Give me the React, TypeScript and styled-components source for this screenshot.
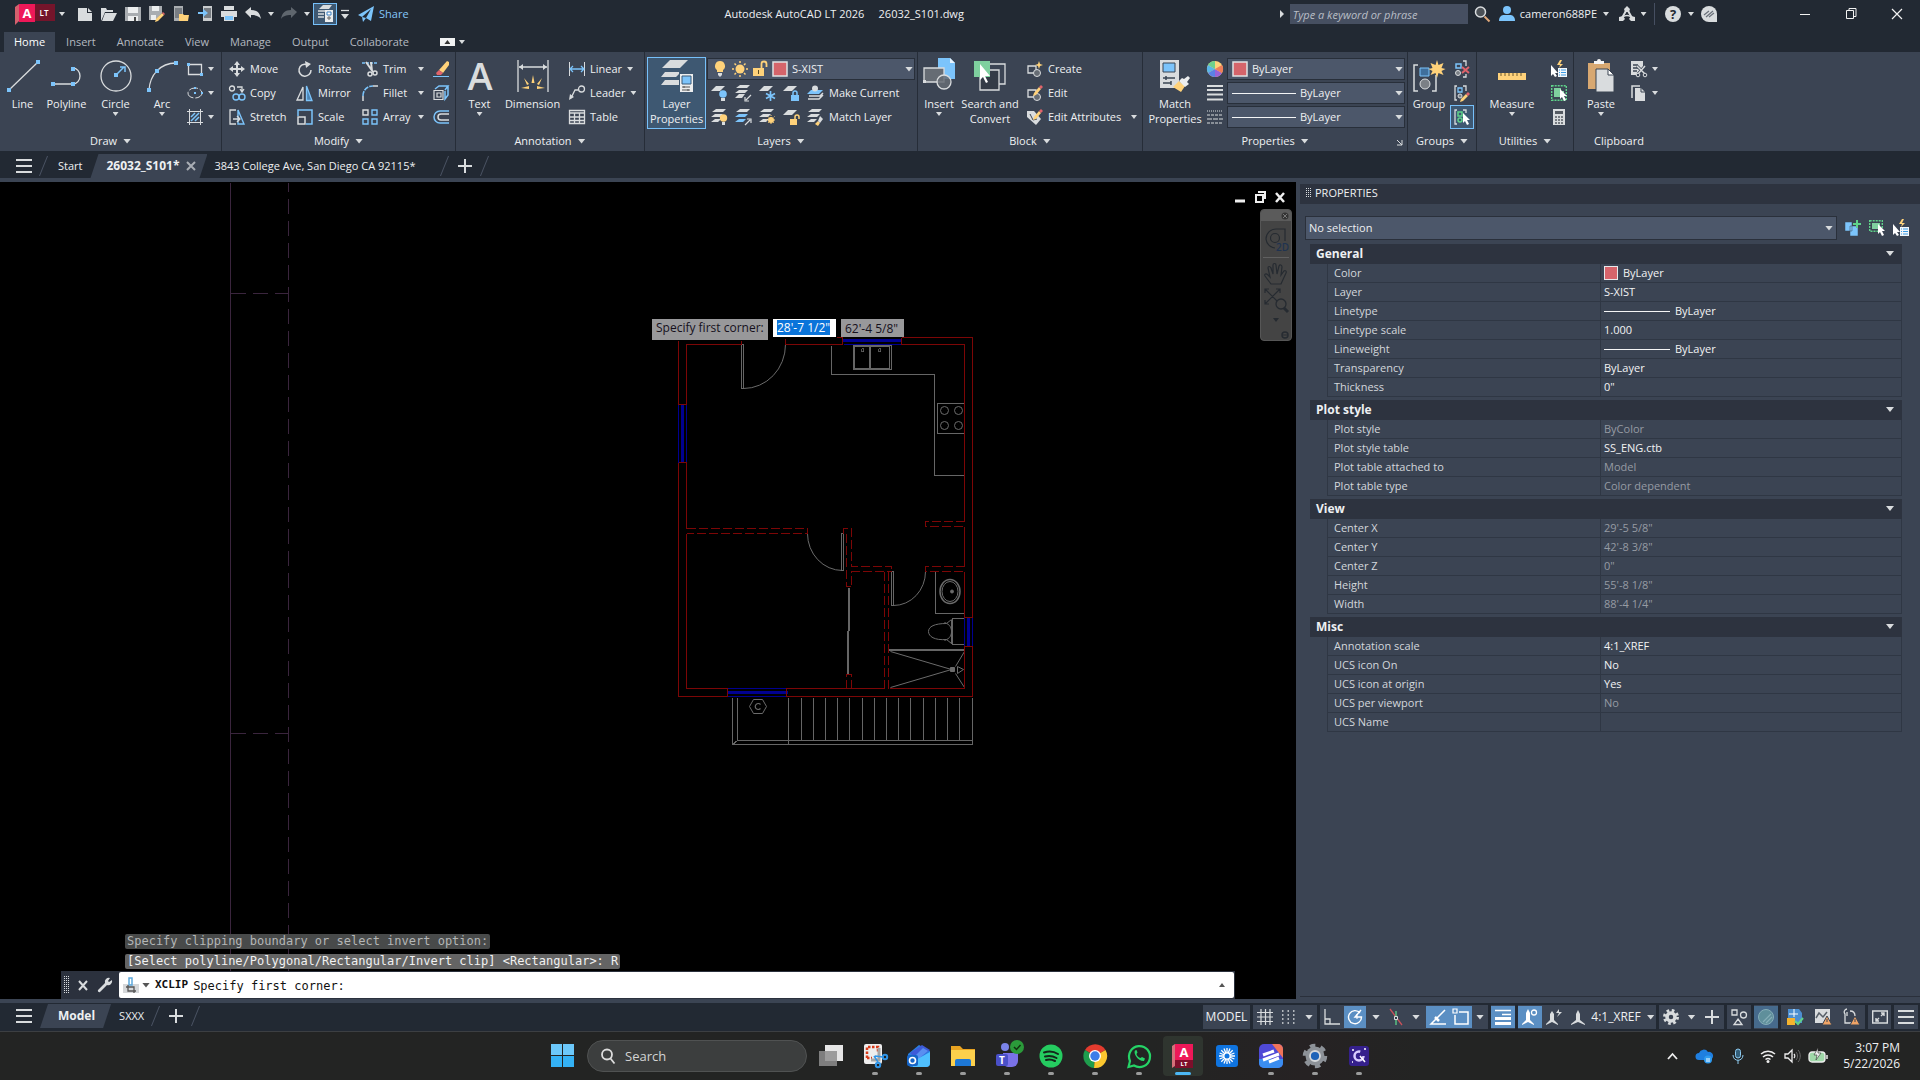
import React from "react";
import styled, { createGlobalStyle, css } from "styled-components";

const W = "#d9dcde";
const B = "#7cc4fb";
const Y = "#ffd27a";
const G = "#5fd28a";
const R = "#e0636b";

const Global = createGlobalStyle`
  * { box-sizing: border-box; }
  html, body, #root { height: 100%; margin: 0; }
  body { background: #222933; overflow: hidden; }
  body, button, input, select, table {
    font-family: "Open Sans", "Noto Sans", sans-serif;
    font-size: 11px;
    line-height: 16px;
    color: #eef0f2;
  }
  button { border: 0; padding: 0; margin: 0; background: none; white-space: nowrap; }
  button, a { cursor: default; }
  input, select { margin: 0; min-width: 0; }
`;

/* ---------- shared pieces ---------- */

const Caret = styled.i<{ $big?: boolean; $up?: boolean; $color?: string }>`
  display: block;
  flex: none;
  width: ${(p) => (p.$big ? 8 : 6)}px;
  height: ${(p) => (p.$big ? 5 : 4)}px;
  background: ${(p) => p.$color ?? W};
  clip-path: ${(p) => (p.$up ? "polygon(50% 0, 100% 100%, 0 100%)" : "polygon(0 0, 100% 0, 50% 100%)")};
`;

const Svg = styled.svg`
  display: block;
  flex: none;
  overflow: visible;
`;

const icons: Record<string, React.ReactNode> = {
  /* quick access */
  newFile: <path d="M1 2h9v5h5v8H1zM11 2l4 4h-4z" fill={W} />,
  open: (
    <>
      <path d="M0 15V2h5l1 2h6v2H4L1 13z" fill={W} />
      <path d="M4 7h12l-4 8H1z" fill={W} />
    </>
  ),
  save: (
    <>
      <path d="M0 1h16v14H0z" fill="#a9adb1" />
      <path d="M3 1h10v6H3zM3 10h10v5H3z" fill="#eceeef" />
      <path d="M9 11h2v4H9z" fill="#444" />
    </>
  ),
  saveAs: (
    <>
      <path d="M0 0h13v7l-6 7H0z" fill="#a9adb1" />
      <path d="M3 0h7v5H3zM2 9h5v5H2z" fill="#eceeef" />
      <path d="M7 13l6-6 2 2-6 6-3 1z" fill={Y} />
      <path d="M13 7l1-1 2 2-1 1z" fill={R} />
    </>
  ),
  mobileOpen: (
    <>
      <path d="M1 0h9v15H1z" fill="#a9adb1" />
      <path d="M2 2h7v10H2z" fill="#777c82" />
      <path d="M6 15V8h4l1 1h5l-1 6z" fill={Y} />
    </>
  ),
  mobileSave: (
    <>
      <path d="M6 0h9v15H6z" fill="#c9ccce" />
      <path d="M7 2h7v10H7z" fill="#777c82" />
      <path d="M1 6h5V3l5 4-5 4V8H1z" fill={B} />
    </>
  ),
  print: (
    <>
      <path d="M3 0h10v4H3zM0 5h16v6H0z" fill={W} />
      <path d="M3 9h10v6H3z" fill={W} />
      <path d="M4 10h8v4H4z" fill={B} />
    </>
  ),
  undo: <path d="M0 6l6-5v3c6 0 9 3 10 9-2-3-5-4-10-4v3z" fill={W} />,
  redo: <path d="M16 6l-6-5v3C4 4 1 7 0 13c2-3 5-4 10-4v3z" fill="#5f666e" />,
  sheet: (
    <>
      <path d="M6 0h9l-3 4H2z" fill={W} />
      <path d="M1 6h7M1 9h6M1 12h6" stroke={W} strokeWidth="1.500" />
      <path d="M8 5h8v12H8z" fill="#eceeef" />
      <path d="M10 7h4v3h-4z" fill="#fff" stroke="#3a7fc0" />
      <path d="M10 13h4M12 11v4" stroke="#666" />
    </>
  ),
  customize: (
    <>
      <path d="M0 2.500h8" stroke={W} strokeWidth="1.300" />
      <path d="M0 6h8l-4 5z" fill={W} />
    </>
  ),
  plane: (
    <>
      <path d="M0 9L16 0l-3 15-5-3-3 4-1-5z" fill={B} />
      <path d="M4 11l9-8-5 9" fill="#222933" />
    </>
  ),
  search: (
    <>
      <circle cx="6.500" cy="6" r="5" fill="#4c5157" stroke={W} strokeWidth="1.500" />
      <path d="M10.500 10.500l5 5" stroke="#e0a87a" strokeWidth="2" />
    </>
  ),
  user: (
    <>
      <circle cx="8" cy="4" r="4" fill={B} />
      <path d="M0 15c0-5 3-6 5-6h6c2 0 5 1 5 6z" fill={B} />
    </>
  ),
  apps: (
    <>
      <path d="M8 3L3 12M8 3l5 9" stroke={W} strokeWidth="2" fill="none" />
      <path d="M4 11c2-2 6-2 8 0" stroke={W} strokeWidth="1.300" fill="none" />
      <path d="M8 0l3 3-1 3H6L5 3zM0 11l4-1 2 3-2 2H0zM16 11l-4-1-2 3 2 2h4z" fill={W} />
    </>
  ),
  help: (
    <>
      <circle cx="8" cy="8" r="8" fill={W} />
      <text x="8" y="13" textAnchor="middle" fontSize="13" fontWeight="700" fill="#222933">?</text>
    </>
  ),
  assistant: (
    <>
      <path d="M16 16H8a8 8 0 1 1 8-8z" fill={W} />
      <path d="M3 9l5-4M5 11l7-6M8 11l5-4" stroke="#69707a" strokeWidth="1.200" />
    </>
  ),
  /* draw, 32px */
  line: (
    <>
      <path d="M2 30L31 2" stroke={W} strokeWidth="1.300" />
      <path d="M0 28h4v4H0zM29 0h4v4h-4z" fill={B} />
    </>
  ),
  polyline: (
    <>
      <path d="M2 24h20a7 8 0 0 0 0-16" fill="none" stroke={W} strokeWidth="1.300" />
      <path d="M0 22h4v4H0zM20 22h4v4h-4zM20 7h4v4h-4z" fill={B} />
    </>
  ),
  circle: (
    <>
      <circle cx="16" cy="16" r="15" fill="none" stroke={W} strokeWidth="1.300" />
      <path d="M16 15l8-8M20 7h5v5" stroke={B} strokeWidth="1.500" fill="none" />
      <path d="M14 13h4v4h-4z" fill={B} />
    </>
  ),
  arc: (
    <>
      <path d="M3 30C4 15 14 3 30 3" fill="none" stroke={W} strokeWidth="1.300" />
      <path d="M1 28h4v4H1zM9 9h4v4H9zM28 1h4v4h-4z" fill={B} />
    </>
  ),
  rect: (
    <>
      <path d="M1.500 3.500h13v10h-13z" fill="none" stroke={W} strokeWidth="1.300" />
      <path d="M0 2h3v3H0zM13 12h3v3h-3z" fill={B} />
    </>
  ),
  ellipse: (
    <>
      <ellipse cx="8" cy="8" rx="7" ry="5" fill="none" stroke={W} strokeDasharray="9 2" />
      <path d="M7 2h2v2H7zM7 7h2v2H7zM14 7h2v2h-2z" fill={B} />
    </>
  ),
  hatch: (
    <>
      <path d="M2.500 0v16M13.500 0v16M0 2.500h16M0 13.500h16" stroke={W} />
      <path d="M4 8l4-4M4 12l8-8M8 12l4-4" stroke={B} strokeWidth="1.500" />
    </>
  ),
  /* modify */
  move: <path d="M8 0l3 4H9v3h3V5l4 3-4 3V9H9v3h2l-3 4-3-4h2V9H4v2L0 8l4-3v2h3V4H5z" fill={W} />,
  rotate: (
    <>
      <path d="M10 3.500A6 6 0 1 0 14 9" fill="none" stroke={W} strokeWidth="1.500" />
      <path d="M8 0l6 3-5 4z" fill={W} />
    </>
  ),
  trim: (
    <>
      <path d="M0 2h16" stroke={B} strokeDasharray="3 1" strokeWidth="1.500" />
      <path d="M4 1l7 10M9 1l1 9" stroke={W} strokeWidth="2" />
      <circle cx="8" cy="13" r="2" fill="none" stroke={W} strokeWidth="1.500" />
      <circle cx="13" cy="12" r="2" fill="none" stroke={W} strokeWidth="1.500" />
    </>
  ),
  erase: (
    <>
      <path d="M0 15.500h16" stroke={B} />
      <path d="M6 9l8-9 2 1v3l-6 8z" fill={Y} />
      <path d="M6 9l4 3-2 2H4l-1-2z" fill={R} />
    </>
  ),
  copy: (
    <>
      <circle cx="3" cy="3.500" r="2.500" fill="none" stroke={W} strokeWidth="1.300" />
      <path d="M8 2h5v4M11 4l2 3 2-3" fill="none" stroke={W} strokeWidth="1.300" />
      <circle cx="7" cy="12" r="3" fill="none" stroke={B} strokeWidth="1.400" />
      <circle cx="13" cy="12" r="3" fill="none" stroke={B} strokeWidth="1.400" />
    </>
  ),
  mirror: (
    <>
      <path d="M6 2v13H0z" fill="none" stroke={W} strokeWidth="1.300" />
      <path d="M9.500 1v14.500H15z" fill="#4d85b5" stroke={B} strokeWidth="1.300" />
    </>
  ),
  fillet: (
    <>
      <path d="M1 16V11M11 1h5" stroke={W} strokeWidth="1.500" />
      <path d="M1 11C1 5 5 1 11 1" stroke={B} strokeWidth="1.600" fill="none" strokeDasharray="5 1" />
    </>
  ),
  explode: (
    <>
      <path d="M1 5.500h9v9H1zM4 8h4v4H4z" fill="none" stroke={W} strokeWidth="1.200" />
      <path d="M2 4l4-3h9l-3 4M15 1v9l-3 4V6" fill="none" stroke={B} strokeWidth="1.500" />
    </>
  ),
  stretch: (
    <>
      <path d="M7 1H1v14h6" fill="none" stroke={W} strokeWidth="1.300" />
      <path d="M9 1l6 14H9z" fill="none" stroke={B} strokeWidth="1.400" />
      <path d="M4 10h7M8 7l3 3-3 3" fill="none" stroke={W} strokeWidth="1.300" />
    </>
  ),
  scale: (
    <>
      <path d="M1 7V1h14v14H9" fill="none" stroke={B} strokeWidth="1.500" />
      <path d="M1 8h7v7H1z" fill="none" stroke={W} strokeWidth="1.500" />
    </>
  ),
  array: (
    <>
      <path d="M1 1h5v5H1z" fill="none" stroke={W} strokeWidth="1.400" />
      <path d="M10 1h5v5h-5zM1 10h5v5H1zM10 10h5v5h-5z" fill="none" stroke={B} strokeWidth="1.400" />
    </>
  ),
  offset: (
    <>
      <path d="M16 2H7a6 6 0 0 0 0 12h9" fill="none" stroke={B} strokeWidth="1.500" />
      <path d="M16 5H8a3 3 0 0 0 0 6h8" fill="none" stroke={W} strokeWidth="1.500" />
    </>
  ),
  /* annotation */
  text: (
    <text x="16" y="30" textAnchor="middle" fontSize="38" fontWeight="600" fill={W}>A</text>
  ),
  dimension: (
    <>
      <path d="M1 0v32M31 0v32M2 7h28" stroke={W} strokeWidth="1.300" />
      <path d="M2 7l4-3v6zM30 7l-4-3v6z" fill={W} />
      <path d="M16 15l1.500 8h-3zM7 18l5 6-2 1zM25 18l-5 6 2 1zM4 28l8-2v3zM28 28l-8-2v3z" fill={Y} />
    </>
  ),
  linear: (
    <>
      <path d="M.5 1v14M15.500 1v14" stroke={W} />
      <path d="M2 8h12M4 5L1 8l3 3M12 5l3 3-3 3" stroke={B} strokeWidth="1.300" fill="none" />
    </>
  ),
  leader: (
    <>
      <circle cx="12.500" cy="4" r="3" fill="none" stroke={W} strokeWidth="1.300" />
      <path d="M9 5H6l-4 8" fill="none" stroke={W} strokeWidth="1.300" />
      <path d="M0 15l1-6 4 3z" fill={W} />
    </>
  ),
  table: (
    <path d="M.5 1.500h15v13H.5zM1 4h15M0 8h16M0 11.500h16M5.500 4v11M10.500 4v11" fill="none" stroke={W} strokeWidth="1.300" />
  ),
  /* layers */
  layerProps: (
    <>
      <path d="M9 0h18l-8 8H1z" fill={W} />
      <path d="M4 12h14v2l-3 3H0zM4 20h14v5H0z" fill={W} />
      <path d="M19 14h13v18H19z" fill="#eceeef" />
      <path d="M21 16h9v8h-9z" fill={B} stroke="#3a5a78" />
      <path d="M21 27h8M21 30h8M23 26v2M27 29v2" stroke="#555" />
    </>
  ),
  bulb: (
    <>
      <path d="M8 0a5 5 0 0 1 3 9v2H5V9a5 5 0 0 1 3-9z" fill={Y} />
      <path d="M6 12h4v2l-2 2-2-2z" fill={W} />
    </>
  ),
  sun: (
    <>
      <circle cx="8" cy="8" r="4.500" fill={Y} />
      <path d="M8 0v2M8 14v2M0 8h2M14 8h2M2.500 2.500l1.500 1.500M12 12l1.500 1.500M2.500 13.500L4 12M12 4l1.500-1.500" stroke={Y} strokeWidth="1.500" />
    </>
  ),
  unlock: (
    <>
      <path d="M1 7h11v8H1z" fill={Y} />
      <path d="M9.500 7V3a2.500 2.500 0 0 1 5 0v3" fill="none" stroke={Y} strokeWidth="1.800" />
      <path d="M6 9h1v4H6z" fill="#5a4a20" />
    </>
  ),
  swatch: <path d="M1 1h14v14H1z" fill="#d6646b" stroke="#dfe2e5" strokeWidth="1.500" />,
  layOff: (
    <>
      <path d="M5 1h9L9 6H0z" fill={W} />
      <circle cx="12" cy="9" r="3.800" fill={B} />
      <path d="M10 13h4v3h-4z" fill={W} />
    </>
  ),
  layIso: (
    <>
      <path d="M5 0h10l-3 3H1zM4 5h9l-3 3H0zM4 9h6l-3 4H0z" fill={W} />
      <path d="M16 10l-5 5M10 12v4h4" stroke={W} fill="none" strokeWidth="1.200" />
    </>
  ),
  layFreeze: (
    <>
      <path d="M5 1h9L9 6H0z" fill={W} />
      <path d="M11.500 6v10M7 8.500l9 5M7 13.500l9-5" stroke={B} strokeWidth="1.700" />
    </>
  ),
  layLock: (
    <>
      <path d="M5 1h9L9 6H0z" fill={W} />
      <path d="M8 10h8v6H8z" fill={B} />
      <path d="M10 10V8a2 2 0 0 1 4 0v2" fill="none" stroke={B} strokeWidth="1.500" />
    </>
  ),
  makeCurrent: (
    <>
      <path d="M4 5h12l-4 4H0z" fill={B} />
      <path d="M2 11h11l3-3M1 14h11l4-4" stroke={W} strokeWidth="1.500" fill="none" />
      <circle cx="8" cy="3.500" r="3" fill={W} />
    </>
  ),
  layOn: (
    <>
      <path d="M5 0h10l-3 3H1zM4 5h8l-3 3H0zM4 10h6l-3 3H0z" fill={W} />
      <circle cx="12.500" cy="9" r="3.700" fill={Y} />
      <path d="M11 13h3v3h-3z" fill={W} />
    </>
  ),
  layUniso: (
    <>
      <path d="M5 0h10l-3 3H1z" fill={W} />
      <path d="M4 5h9l-3 3H0zM4 10h7l-3 3H0z" fill={B} />
      <path d="M10 16l5-5M12 10h4v4" stroke={W} fill="none" strokeWidth="1.200" />
    </>
  ),
  layThaw: (
    <>
      <path d="M5 0h10l-3 3H1zM4 5h8l-3 3H0zM4 10h6l-3 3H0z" fill={W} />
      <circle cx="12" cy="11" r="3" fill={Y} />
      <path d="M12 6v10M7 11h10M8.500 7.500l7 7M15.500 7.500l-7 7" stroke={Y} strokeDasharray="1 1" />
    </>
  ),
  layUnlock: (
    <>
      <path d="M5 1h9L9 6H0z" fill={W} />
      <path d="M7 10h7v6H7z" fill={Y} />
      <path d="M12 10V8a2 2 0 0 1 4 0v2" fill="none" stroke={Y} strokeWidth="1.500" />
    </>
  ),
  matchLayer: (
    <>
      <path d="M5 0h10l-3 3H1zM4 5h9l-3 3H0zM4 10h6l-3 3H0z" fill={W} />
      <path d="M8 15l3-3 2 2-2 3z" fill={Y} />
      <path d="M11 12l2-5 3 3-3 4z" fill={W} />
    </>
  ),
  /* block */
  insert: (
    <>
      <path d="M15-2h12l5 5v16H15z" fill={B} />
      <path d="M27-2l5 5h-5z" fill="#e9f4fd" />
      <path d="M1 8h20v14H1z" fill="#666c74" stroke={W} strokeWidth="1.300" />
      <circle cx="21" cy="22" r="7" fill="#666c74" fillOpacity=".85" stroke={W} strokeWidth="1.300" />
      <path d="M0 20h3v3H0z" fill={W} />
    </>
  ),
  searchConvert: (
    <>
      <path d="M13 4h18v20H13z" fill="none" stroke={W} strokeWidth="1.300" />
      <path d="M6 10h19v20H6z" fill="#343b47" stroke={W} strokeWidth="1.300" />
      <path d="M0 1h16v16H0z" fill="#7fd09f" />
      <path d="M6 4v16l3-3 3 6 2-1-3-6h5z" fill="#fff" />
    </>
  ),
  create: (
    <>
      <path d="M1 5h8v7H1z" fill="none" stroke={W} strokeWidth="1.300" />
      <circle cx="10" cy="12" r="3.500" fill="#666c74" stroke={W} />
      <path d="M12 0l1 3 3 1-3 1-1 3-1-3-3-1 3-1z" fill={Y} />
    </>
  ),
  edit: (
    <>
      <path d="M1 5h8v7H1z" fill="none" stroke={W} strokeWidth="1.300" />
      <circle cx="10" cy="12" r="3.500" fill="#666c74" stroke={W} />
      <path d="M7 8l5-6 2 2-5 6-3 1z" fill={Y} />
      <path d="M12 2l2-2 2 2-2 2z" fill={R} />
    </>
  ),
  editAttr: (
    <>
      <path d="M0 2h7l7 8-5 6-9-8z" fill={W} />
      <path d="M3 5l3 6 4-1" stroke="#3b4453" fill="none" />
      <path d="M7 8l5-6 2 2-5 6-3 1z" fill={Y} />
      <path d="M12 2l2-2 2 2-2 2z" fill={R} />
    </>
  ),
  /* properties */
  matchProps: (
    <>
      <path d="M1 0h19v28H1z" fill={W} />
      <path d="M4 3h12v9H4z" fill={B} stroke="#3a4654" />
      <path d="M4 18h12M4 23h8M7 16v4M12 21v4" stroke="#3a4654" strokeWidth="1.500" />
      <path d="M14 27l6-6 6 5-4 6z" fill={Y} />
      <path d="M20 21l3-3 2 1 4-3 2 2-3 4 2 2-4 3z" fill="#eceeef" />
    </>
  ),
  wheel: (
    <>
      <circle cx="8" cy="8" r="8" fill={Y} />
      <path d="M8 8V0a8 8 0 0 0-7 4z" fill="#6fd08c" />
      <path d="M8 8L1 4a8 8 0 0 0 0 8z" fill="#59b7e8" />
      <path d="M8 8l-7 4a8 8 0 0 0 7 4z" fill="#5a82e6" />
      <path d="M8 8v8a8 8 0 0 0 7-4z" fill="#9a63d8" />
      <path d="M8 8l7 4a8 8 0 0 0 0-8z" fill="#ef7f5a" />
    </>
  ),
  weights: <path d="M0 1h16M0 5h16M0 9.500h16M0 14.500h16" stroke={W} strokeWidth="2" />,
  ltypes: (
    <>
      <path d="M0 2h16" stroke={W} strokeDasharray="1 1" />
      <path d="M0 6h16M0 14h16" stroke={W} strokeDasharray="3 1" />
      <path d="M0 10h16" stroke={W} strokeDasharray="5 1" />
    </>
  ),
  /* groups */
  group: (
    <>
      <path d="M5 5H1v26h4M19 31h4V15" fill="none" stroke={W} strokeWidth="1.500" />
      <path d="M7 8h9v8H7z" fill="#3f6f9c" stroke={B} />
      <circle cx="12" cy="24" r="5" fill="#7b8086" stroke={W} />
      <path d="M24 0l1.500 5 5-2-2 5 4 1-4 2 2 4-5-2-1.500 5-1.500-5-5 2 2-4-4-2 4-1-2-5 5 2z" fill={Y} />
    </>
  ),
  ungroup: (
    <>
      <path d="M2 3h5v4H2z" fill="none" stroke={B} strokeWidth="1.500" />
      <circle cx="4" cy="12" r="2.500" fill="#7b8086" stroke={W} />
      <path d="M9 0h3v5M9 16h3v-3" fill="none" stroke={W} strokeWidth="1.300" />
      <path d="M8 6l7 6M15 6l-7 6" stroke={R} strokeWidth="2" />
    </>
  ),
  groupEdit: (
    <>
      <path d="M3 1H1v14h2M9 1h3v5" fill="none" stroke={W} strokeWidth="1.300" />
      <path d="M4 3h4v4H4z" fill="none" stroke={B} strokeWidth="1.300" />
      <circle cx="6" cy="11" r="2" fill="#7b8086" stroke={W} />
      <path d="M7 14l5-5 2 2-5 5-3 1z" fill={Y} />
      <path d="M12 9l2-2 2 2-2 2z" fill={R} />
    </>
  ),
  groupSel: (
    <>
      <path d="M3 1H1v14h2M9 1h3v3" fill="none" stroke={W} strokeWidth="1.300" />
      <path d="M4 3h4v4H4z" fill="none" stroke={G} strokeWidth="1.500" />
      <circle cx="6" cy="11" r="2" fill="none" stroke={G} strokeWidth="1.500" />
      <path d="M9 4v10l2-2 2 4 2-1-2-4h3z" fill="#fff" />
    </>
  ),
  /* utilities */
  measure: (
    <>
      <path d="M2 13h28v7H2z" fill={Y} />
      <path d="M5 13v3M9 13v3M13 13v3M17 13v3M21 13v3M25 13v3" stroke="#6d5a30" />
    </>
  ),
  quickSel: (
    <>
      <path d="M9-1l-3 5h3l-1 3 4-4H9l2-4z" fill={Y} />
      <path d="M0 4v11l2-2 2 3 2-1-2-3h3z" fill="#fff" />
      <path d="M7 7h9v9H7z" fill="#f4f8fb" />
      <path d="M8 9h1M8 11.500h1M8 14h1M10 9h5M10 11.500h5M10 14h5" stroke="#3a9be6" />
    </>
  ),
  selectAll: (
    <>
      <path d="M.7.7h14.600v14.600H.7z" fill="none" stroke={G} strokeWidth="1.400" strokeDasharray="2 1" />
      <path d="M3 3h7v3h3v6H3z" fill="#7fd09f" />
      <path d="M9 4v10l2-2 2 4 2-1-2-4h3z" fill="#fff" />
    </>
  ),
  selectObjects: (
    <>
      <path d="M.7.7h12.600v10.600H.7z" fill="none" stroke={G} strokeWidth="1.400" strokeDasharray="2 1" />
      <path d="M3 3h8v6H3z" fill="#7fd09f" />
      <path d="M9 4v10l2-2 2 4 2-1-2-4h3z" fill="#fff" />
    </>
  ),
  calc: (
    <>
      <path d="M2 0h12v16H2z" fill={W} />
      <path d="M4 2h8v3H4z" fill="#555b63" />
      <path d="M4 8h8M4 11h8M4 14h8" stroke="#555b63" strokeWidth="1.600" strokeDasharray="2 1" />
    </>
  ),
  /* clipboard */
  paste: (
    <>
      <path d="M3 3h22v26H3z" fill="#d8a871" />
      <path d="M9 4V1h3a2 2 0 0 1 4 0h3v3z" fill="#f4f4f4" />
      <path d="M11 9h12l6 6v17H11z" fill={W} stroke="#3b4453" />
      <path d="M23 9l6 6h-6z" fill="#fff" stroke="#3b4453" />
    </>
  ),
  cut: (
    <>
      <path d="M0 0h12v6l-4 8H0z" fill={W} />
      <path d="M2 4h5M2 7h5M2 10h4" stroke="#3b4453" strokeWidth="1.300" />
      <path d="M6 5l8 8M14 5l-7 8" stroke="#3b4453" strokeWidth="3" />
      <path d="M6 5l8 8M14 5l-7 8" stroke={W} strokeWidth="1.500" />
      <circle cx="7" cy="14" r="1.800" fill="#3b4453" stroke={W} />
      <circle cx="14" cy="14" r="1.800" fill="#3b4453" stroke={W} />
    </>
  ),
  copyClip: (
    <>
      <path d="M1 13V1h8" fill="none" stroke={W} strokeWidth="1.500" />
      <path d="M4 3h6l4 4v9H4z" fill={W} />
      <path d="M10 3v4h4" fill="none" stroke="#3b4453" />
    </>
  ),
  pickAdd: (
    <>
      <path d="M0 2h7v9H0zM5 6h8v10H5z" fill={B} stroke="#3b4453" strokeWidth=".5" />
      <path d="M12 0v8M8 4h8" stroke={G} strokeWidth="2" />
    </>
  ),
  /* misc */
  plus: <path d="M8 1v14M1 8h14" stroke={W} strokeWidth="2" />,
  menu: <path d="M0 2h16M0 8h16M0 14h16" stroke={W} strokeWidth="2" />,
  close: <path d="M3 4l8 9M11 4l-8 9" stroke={W} strokeWidth="2" />,
  wrench: (
    <path d="M1 13l7-7a4 4 0 0 1 5-5l-2 3 1 1 3-2a4 4 0 0 1-5 5l-7 7a1.500 1.500 0 0 1-2-2z" fill={W} />
  ),
  xclip: (
    <>
      <path d="M0 7h16v9H0z" fill="#d5d7d9" />
      <path d="M6 1h3v7H6z" fill="none" stroke="#5ea9dc" strokeWidth="1.500" />
      <path d="M5 8v6h8M3 10h8v6" fill="none" stroke="#555" strokeWidth="1.300" />
    </>
  ),
  /* status */
  grid: <path d="M4 0v16M8.500 0v16M13 0v16M0 3.500h16M0 8h16M0 12.500h16" stroke={W} strokeWidth="1.200" />,
  snap: <path d="M1 2h14M1 6h14M1 10h14M1 14h14" stroke={W} strokeWidth="1.500" strokeDasharray="1.500 4" />,
  ortho: <path d="M1 0v15h15M1 10h5v5" fill="none" stroke={W} strokeWidth="1.300" />,
  polar: (
    <>
      <path d="M13 4a6.500 6.500 0 1 0 1.500 4H8l6-7" fill="none" stroke="#fff" strokeWidth="1.400" />
      <path d="M10 5v5" stroke="#fff" />
    </>
  ),
  iso: (
    <>
      <path d="M2 0l12 16" stroke="#c9525a" strokeWidth="1.300" />
      <path d="M8 2v14" stroke={G} strokeWidth="1.300" />
      <path d="M6.500 7.500h3v3h-3z" fill="#2f3744" stroke={W} />
    </>
  ),
  track: (
    <>
      <path d="M15 1L1 15h15" fill="none" stroke="#fff" strokeWidth="1.500" />
      <path d="M5 8l4 4" stroke="#fff" strokeWidth="2.500" />
    </>
  ),
  osnap: (
    <>
      <path d="M6 3h9v12H2V6" fill="none" stroke="#fff" strokeWidth="1.500" />
      <path d="M0 0h4v4H0z" fill="none" stroke="#fff" strokeWidth="1.200" />
    </>
  ),
  lweight: (
    <>
      <path d="M0 1.500h16M7 5.500h9" stroke="#fff" strokeWidth="1.600" />
      <path d="M0 9.500h16M0 14.500h16" stroke="#fff" strokeWidth="3" />
    </>
  ),
  annoVis: (
    <>
      <path d="M6 0l2 4v7l4 4v1l-6-3-6 3v-1l4-4V4z" fill="#fff" />
      <circle cx="12" cy="3.500" r="2.500" fill="none" stroke="#fff" strokeWidth="1.300" />
    </>
  ),
  annoAuto: (
    <>
      <path d="M6 2l2 3v6l4 4v1l-6-3-6 3v-1l4-4V5z" fill={W} />
      <path d="M13 0l-3 4h3l-2 4 5-5h-3z" fill={W} />
    </>
  ),
  annoScale: <path d="M8 1l2 4v6l5 4v1l-7-3-7 3v-1l5-4V5z" fill={W} />,
  gear: (
    <>
      <circle cx="8" cy="8" r="6.500" fill="none" stroke={W} strokeWidth="3" strokeDasharray="2.600 2.500" />
      <circle cx="8" cy="8" r="4" fill="none" stroke={W} strokeWidth="3.500" />
    </>
  ),
  isolate: (
    <>
      <path d="M1 1h5v5H1zM7 10l4 5.500H3z" fill="none" stroke={W} strokeWidth="1.300" />
      <circle cx="12.500" cy="6" r="3" fill="none" stroke={W} strokeWidth="1.300" />
    </>
  ),
  hardware: (
    <>
      <circle cx="8" cy="8" r="7.500" fill="#5f8f9b" stroke="#86aeb8" />
      <path d="M5 13l8-8M8 14l6-6" stroke="#86aeb8" strokeWidth="1.200" />
    </>
  ),
  xref: (
    <>
      <path d="M1 0h11l3 4v10H1z" fill="#4d8fd0" />
      <path d="M0 9h8v7H0z" fill="#f5b32e" />
      <path d="M7 0v8M2 5h9" stroke="#fff" />
      <path d="M8 12l3 3 5-6" stroke={G} strokeWidth="2" fill="none" />
    </>
  ),
  monitor: (
    <>
      <path d="M0 0h15v14H0z" fill={W} />
      <path d="M1 9l3-5 4 4 4-5" stroke="#586069" strokeWidth="1.500" fill="none" />
      <path d="M12 7l5 9H7z" fill="#f0a466" stroke="#3b4453" />
      <path d="M12 10v3" stroke="#3b4453" />
    </>
  ),
  notes: (
    <>
      <path d="M4 0a3 3 0 0 0-2 5v9h6M4 3v4M7 2c4 0 5 2 5 5" fill="none" stroke={W} strokeWidth="1.300" />
      <path d="M12 7l5 9H7z" fill="#f0a466" stroke="#3b4453" />
      <path d="M12 10v3" stroke="#3b4453" />
    </>
  ),
  clean: (
    <path d="M.7 2h14.600v12H.7zM4 9v3h3M12 7V4H9M4 12l3-3M12 4L9 7" fill="none" stroke={W} strokeWidth="1.400" />
  ),
  /* navigation bar */
  wheel2d: (
    <>
      <path d="M13 1h9v12M3 11a10 10 0 0 1 10-10M3 11a10 10 0 0 0 9 9" fill="none" stroke="#262b31" strokeWidth="1.200" />
      <circle cx="12" cy="10" r="4.500" fill="none" stroke="#262b31" strokeWidth="1.200" />
      <text x="13" y="23" fontSize="10" fontWeight="600" fill="#1f3350">2D</text>
    </>
  ),
  hand: (
    <path d="M7 22L1 14c-1-2 1-3 3-1l2 2-2-9c0-2 2-2 3 0l2 6V3c0-2 3-2 3 0l1 9 2-8c1-2 3-1 3 1l-1 8 3-4c1-1 3 0 2 2l-5 11z" fill="none" stroke="#262b31" strokeWidth="1.200" />
  ),
  zoomExt: (
    <>
      <path d="M1 1l15 15M16 1L1 16M1 5V1h4M12 1h4v4M1 12v4h4" fill="none" stroke="#262b31" strokeWidth="1.200" />
      <circle cx="17" cy="16" r="5" fill="#444" stroke="#262b31" strokeWidth="1.300" />
      <path d="M20 20l4 4" stroke="#262b31" strokeWidth="3" />
    </>
  ),
  winMin: <path d="M0 8.500h10" stroke="#f2f2f2" />,
  winRestore: (
    <path d="M.5 4.500h7v8h-7zM3 4V2.500h7v8H8" fill="none" stroke="#f2f2f2" />
  ),
  winClose: <path d="M0 3l10 10M10 3L0 13" stroke="#f2f2f2" strokeWidth="1.200" />,
};

function Icon({ n, s = 16, h }: { n: string; s?: number; h?: number }) {
  return (
    <Svg width={s} height={h ?? s} aria-hidden="true">
      {icons[n]}
    </Svg>
  );
}

/* ---------- application frame ---------- */

const Screen = styled.div`
  display: flex;
  flex-direction: column;
  height: 100vh;
`;

const TitleBar = styled.header`
  display: flex;
  align-items: center;
  height: 32px;
  padding: 0 0 4px 15px;
`;

const AppMenu = styled.button`
  display: flex;
  align-items: center;
  width: 58px;
  gap: 4px;
`;

const IconButton = styled.button<{ $w?: number; $h?: number; $on?: boolean }>`
  display: flex;
  align-items: center;
  justify-content: center;
  flex: none;
  width: ${(p) => p.$w ?? 24}px;
  height: ${(p) => p.$h ?? 22}px;
  ${(p) => p.$on && css`background: #3e5872; border: 1px solid #76c0fa;`}
`;

const ShareLink = styled.button`
  display: flex;
  align-items: center;
  gap: 5px;
  margin-left: 6px;
  color: #84c6fa;
`;

const DocTitle = styled.h1`
  flex: 1;
  margin: 0;
  text-align: center;
  font-size: 11px;
  font-weight: 400;
  white-space: pre;
`;

const KeywordBox = styled.input`
  width: 178px;
  height: 20px;
  margin: 0 2px 0 6px;
  padding: 0 3px;
  border: 0;
  background: #464f61;
  font-style: italic;
  &::placeholder { color: #b9bec6; opacity: 1; }
`;

const UserButton = styled.button`
  display: flex;
  align-items: center;
  gap: 5px;
  margin-left: 5px;
`;

const TitleDivider = styled.i`
  width: 1px;
  height: 22px;
  margin: 0 6px;
  background: #464f61;
`;

const WindowButtons = styled.div`
  display: flex;
  margin-left: 61px;
`;

const Tabs = styled.nav`
  display: flex;
  align-items: stretch;
  gap: 1px;
  height: 20px;
  padding-left: 4px;
`;

const Tab = styled.button<{ $on?: boolean }>`
  padding: 0 10px;
  color: ${(p) => (p.$on ? "#fff" : "#b4b9c0")};
  background: ${(p) => (p.$on ? "#3b4453" : "none")};
`;

const TabToggle = styled.button`
  display: flex;
  align-items: center;
  gap: 4px;
  margin-left: 20px;
  > span {
    display: grid;
    place-items: center;
    width: 15px;
    height: 8px;
    background: #f0f1f2;
  }
`;

const Ribbon = styled.section`
  display: flex;
  height: 99px;
  background: #3b4453;
`;

const Panel = styled.section<{ $w: number; $last?: boolean }>`
  position: relative;
  display: flex;
  flex-direction: column;
  flex: none;
  width: ${(p) => p.$w}px;
  border-right: ${(p) => (p.$last ? 0 : 1)}px solid #262d38;
`;

const PanelBody = styled.div`
  display: flex;
  flex: 1;
  padding-top: 5px;
`;

const PanelTitle = styled.button`
  display: flex;
  align-items: center;
  justify-content: center;
  gap: 6px;
  height: 20px;
`;

const Launcher = styled.button`
  position: absolute;
  right: 4px;
  bottom: 5px;
`;

const BigButton = styled.button<{ $w: number; $on?: boolean }>`
  display: flex;
  flex-direction: column;
  align-items: center;
  flex: none;
  width: ${(p) => p.$w}px;
  height: 72px;
  padding-top: ${(p) => (p.$on ? 2 : 3)}px;
  line-height: 15px;
  text-align: center;
  white-space: pre;
  ${(p) => p.$on && css`background: #3e5872; border: 1px solid #76c0fa;`}
  > span { margin-top: 4px; }
  > i { margin-top: 1px; }
`;

const Column = styled.div<{ $w?: number; $pad?: number }>`
  display: flex;
  flex-direction: column;
  flex: ${(p) => (p.$w ? "none" : 1)};
  width: ${(p) => (p.$w ? p.$w + "px" : "auto")};
  padding-left: ${(p) => p.$pad ?? 0}px;
`;

const Tool = styled.div<{ $pad?: number }>`
  display: flex;
  align-items: center;
  height: 24px;
  padding-left: ${(p) => p.$pad ?? 0}px;
`;

const ToolButton = styled.button`
  display: flex;
  align-items: center;
  gap: 5px;
`;

const DropButton = styled.button<{ $right?: boolean }>`
  display: flex;
  justify-content: center;
  width: 16px;
  margin-left: ${(p) => (p.$right ? "auto" : 0)};
`;

const LayerIcons = styled.div`
  display: flex;
  gap: 8px;
  padding-right: 6px;
`;

const Combo = styled.div`
  display: flex;
  align-items: center;
  gap: 4px;
  height: 22px;
  margin: 1px 2px 1px 0;
  padding: 0 1px 0 4px;
  background: #4c576a;
  border: 1px solid #282f3a;
  select {
    flex: 1;
    height: 20px;
    padding: 0;
    border: 0;
    appearance: none;
    background: none;
  }
  option { color: #111; }
`;

const LineSample = styled.i<{ $w: number }>`
  flex: none;
  width: ${(p) => p.$w}px;
  height: 1px;
  background: #f4f5f6;
`;

function ToolItem({ i, t, drop, right }: { i: string; t?: string; drop?: boolean; right?: boolean }) {
  return (
    <Tool>
      <ToolButton aria-label={t ?? i}>
        <Icon n={i} />
        {t}
      </ToolButton>
      {drop && (
        <DropButton $right={right} aria-label={`${t ?? i} options`}>
          <Caret />
        </DropButton>
      )}
    </Tool>
  );
}

function Big({ i, t, w, drop, on }: { i: string; t: string; w: number; drop?: boolean; on?: boolean }) {
  return (
    <BigButton $w={w} $on={on}>
      <Icon n={i} s={32} />
      <span>{t}</span>
      {drop && <Caret />}
    </BigButton>
  );
}

function RibbonPanel(p: { w: number; t: string; last?: boolean; noMenu?: boolean; children: React.ReactNode; extra?: React.ReactNode }) {
  return (
    <Panel $w={p.w} $last={p.last}>
      <PanelBody>{p.children}</PanelBody>
      <PanelTitle>
        {p.t}
        {!p.noMenu && <Caret $big />}
      </PanelTitle>
      {p.extra}
    </Panel>
  );
}

/* ---------- document tabs ---------- */

const DocTabs = styled.nav`
  display: flex;
  align-items: center;
  height: 27px;
  padding: 3px 0 0 12px;
`;

const Strip = styled.div`
  height: 4px;
  background: #3b4453;
`;

const Slash = styled.i`
  flex: none;
  width: 1px;
  height: 20px;
  margin: 0 8px 0 7px;
  background: #4b5464;
  transform: skewX(-22deg);
`;

const DocTab = styled.button<{ $on?: boolean; $pad: string; $ml?: number }>`
  display: flex;
  align-items: center;
  gap: 8px;
  height: 24px;
  margin-left: ${(p) => p.$ml ?? 0}px;
  padding: ${(p) => p.$pad};
  ${(p) => p.$on && css`
    font-size: 12px;
    font-weight: 700;
    background: #3b4453;
    clip-path: polygon(8px 0, 100% 0, calc(100% - 8px) 100%, 0 100%);
  `}
`;

/* ---------- work area ---------- */

const Work = styled.main`
  display: flex;
  flex: 1;
  min-height: 0;
`;

const Canvas = styled.section`
  position: relative;
  flex: 1;
  overflow: hidden;
  background: #000;
`;

const Drawing = styled.svg`
  position: absolute;
  inset: 0;
  width: 100%;
  height: 100%;
  shape-rendering: crispEdges;
`;

const DynamicInput = styled.div`
  position: absolute;
  left: 652px;
  top: 137px;
  display: flex;
  align-items: flex-start;
  gap: 5px;
  font-size: 12px;
`;

const Prompt = styled.label`
  height: 21px;
  padding: 1px 0 0 4px;
  width: 116px;
  color: #15101c;
  background: #98989a;
`;

const Coord = styled.input`
  width: 63px;
  height: 18px;
  padding: 0 4px;
  border: 0;
  font-size: 12px;
  color: #15101c;
  background: #98989a;
`;

const ActiveCoord = styled.label`
  display: block;
  width: 63px;
  height: 18px;
  padding: 1px 4px;
  background: #fff;
  input {
    display: block;
    width: 53px;
    height: 15px;
    padding: 0;
    border: 0;
    font-size: 12px;
    color: #fff;
    background: #0a74da;
  }
`;

const ChildButtons = styled.div`
  position: absolute;
  right: 11px;
  top: 9px;
  display: flex;
  gap: 9px;
`;

const NavBar = styled.nav`
  position: absolute;
  right: 4px;
  top: 27px;
  display: flex;
  flex-direction: column;
  align-items: center;
  width: 32px;
  height: 132px;
  border: 1px solid #565656;
  border-radius: 4px;
  background: #444;
  overflow: hidden;
`;

const NavCap = styled.div<{ $top?: boolean }>`
  display: flex;
  justify-content: flex-end;
  align-items: center;
  width: 100%;
  height: 11px;
  padding-right: 2px;
  margin-top: ${(p) => (p.$top ? 0 : "auto")};
  background: ${(p) => (p.$top ? "#5b5b5b" : "none")};
`;

const NavRule = styled.i`
  width: 26px;
  height: 1px;
  background: #606060;
`;

const CommandArea = styled.div`
  position: absolute;
  left: 61px;
  right: 61px;
  bottom: 0;
  font-family: "DejaVu Sans Mono", monospace;
`;

const History = styled.p<{ $new?: boolean }>`
  width: fit-content;
  height: 15px;
  margin: 0 0 5px 64px;
  padding: 0 2px;
  border-radius: 2px;
  font-size: 12px;
  line-height: 15px;
  white-space: pre;
  color: ${(p) => (p.$new ? "#f2f2f2" : "#b4b6b6")};
  background: ${(p) => (p.$new ? "#646464" : "#484a4a")};
  &:nth-of-type(2) { margin-bottom: 2px; }
`;

const CommandBar = styled.div`
  display: flex;
  height: 28px;
  background: #2b313d;
  border: 1px solid #2b313d;
`;

const CommandTools = styled.div`
  display: flex;
  align-items: center;
  gap: 7px;
  width: 57px;
  padding-left: 2px;
`;

const CommandLine = styled.label`
  display: flex;
  align-items: center;
  flex: 1;
  padding: 0 4px;
  border-radius: 2px;
  background: #fff;
  color: #111;
  font-size: 12px;
  > i { margin: 0 5px 0 3px; }
  > strong { font-weight: 700; font-size: 11px; margin-right: 5px; }
  > input {
    flex: 1;
    padding: 1px 0 0;
    border: 0;
    font: inherit;
    color: #111;
    background: none;
  }
`;

const Grip = styled.i<{ $h: number }>`
  flex: none;
  width: 5px;
  height: ${(p) => p.$h}px;
  background: repeating-linear-gradient(#0000 0 1px, #2b313d 1px 2px),
    repeating-linear-gradient(90deg, ${W} 0 1px, #2b313d 1px 2px);
`;

/* ---------- properties palette ---------- */

const Palette = styled.aside`
  display: flex;
  flex-direction: column;
  width: 624px;
  padding: 2px 0 2px 4px;
  background: #3b4453;
`;

const PaletteTitle = styled.h2`
  display: flex;
  align-items: center;
  gap: 4px;
  height: 20px;
  margin: 0;
  padding: 0 0 3px 6px;
  font-size: 11px;
  font-weight: 400;
  background: #2d333f;
`;

const PaletteBody = styled.div`
  flex: 1;
  padding-top: 12px;
  border-bottom: 1px solid #2a303b;
`;

const SelectionRow = styled.div`
  display: flex;
  align-items: center;
  gap: 8px;
  padding: 0 11px 0 5px;
  margin-bottom: 4px;
`;

const SelectionBox = styled.div`
  display: flex;
  align-items: center;
  flex: 1;
  height: 24px;
  padding: 0 3px;
  background: #4c576a;
  border: 1px solid #2a303b;
  select {
    flex: 1;
    height: 22px;
    padding: 0;
    border: 0;
    appearance: none;
    background: none;
  }
  option { color: #111; }
`;

const SectionTitle = styled.button`
  display: flex;
  align-items: center;
  justify-content: space-between;
  width: 592px;
  height: 20px;
  margin-left: 10px;
  padding: 0 8px 1px 6px;
  font-size: 12px;
  font-weight: 700;
  background: #2d333f;
`;

const PropTable = styled.table`
  width: 575px;
  margin: 0 0 3px 27px;
  border-collapse: separate;
  border-spacing: 0;
  table-layout: fixed;
  border-left: 1px solid #2f3744;
  th, td {
    height: 19px;
    padding: 0 0 0 6px;
    border-right: 1px solid #2f3744;
    border-bottom: 1px solid #2f3744;
    font-size: 11px;
    line-height: 16px;
    text-align: left;
    font-weight: 400;
  }
  th { width: 273px; color: #d3d7dc; }
  td { padding-left: 3px; }
`;

const Value = styled.span<{ $dim?: boolean }>`
  display: flex;
  align-items: center;
  gap: 5px;
  height: 16px;
  color: ${(p) => (p.$dim ? "#969ba3" : "#f2f3f4")};
`;

const Swatch = styled.i`
  width: 14px;
  height: 14px;
  background: #d6646b;
  border: 1px solid #e6e8ea;
`;

type Row = [string, string, ("dim" | "line" | "swatch")?];
const sections: { title: string; rows: Row[] }[] = [
  {
    title: "General",
    rows: [
      ["Color", "ByLayer", "swatch"],
      ["Layer", "S-XIST"],
      ["Linetype", "ByLayer", "line"],
      ["Linetype scale", "1.000"],
      ["Lineweight", "ByLayer", "line"],
      ["Transparency", "ByLayer"],
      ["Thickness", '0"'],
    ],
  },
  {
    title: "Plot style",
    rows: [
      ["Plot style", "ByColor", "dim"],
      ["Plot style table", "SS_ENG.ctb"],
      ["Plot table attached to", "Model", "dim"],
      ["Plot table type", "Color dependent", "dim"],
    ],
  },
  {
    title: "View",
    rows: [
      ["Center X", "29'-5 5/8\"", "dim"],
      ["Center Y", "42'-8 3/8\"", "dim"],
      ["Center Z", '0"', "dim"],
      ["Height", "55'-8 1/8\"", "dim"],
      ["Width", "88'-4 1/4\"", "dim"],
    ],
  },
  {
    title: "Misc",
    rows: [
      ["Annotation scale", "4:1_XREF"],
      ["UCS icon On", "No"],
      ["UCS icon at origin", "Yes"],
      ["UCS per viewport", "No", "dim"],
      ["UCS Name", ""],
    ],
  },
];

/* ---------- status bar ---------- */

const StatusBar = styled.footer`
  display: flex;
  align-items: flex-start;
  height: 29px;
  padding: 0 2px 0 12px;
  border-bottom: 1px solid #3c3f42;
`;

const LayoutTabs = styled.nav`
  display: flex;
  align-items: center;
  flex: 1;
  height: 26px;
`;

const StatusGroup = styled.div`
  display: flex;
  align-items: center;
  flex: none;
  height: 24px;
  margin: 2px 0 0 3px;
  background: #3b4453;
`;

const StatusButton = styled.button<{ $on?: boolean; $w?: number; $fill?: string }>`
  display: flex;
  align-items: center;
  justify-content: center;
  gap: 6px;
  flex: none;
  width: ${(p) => p.$w ?? 24}px;
  height: 22px;
  font-size: 12px;
  background: ${(p) => p.$fill ?? (p.$on ? "#5b8fc3" : "none")};
`;

/* ---------- taskbar ---------- */

const Taskbar = styled.footer`
  display: flex;
  align-items: center;
  height: 48px;
  padding: 0 20px 0 540px;
  background: linear-gradient(90deg, #232423 60%, #262223 68%, #232423 74%);
`;

const TaskButton = styled.button<{ $on?: boolean; $run?: boolean }>`
  position: relative;
  display: grid;
  place-items: center;
  flex: none;
  width: 40px;
  height: 40px;
  margin: 0 2px;
  border-radius: 4px;
  background: ${(p) => (p.$on ? "#2f352f" : "none")};
  &::after {
    content: "";
    position: absolute;
    left: 50%;
    bottom: 1px;
    width: ${(p) => (p.$on ? 16 : p.$run ? 6 : 0)}px;
    height: 3px;
    border-radius: 2px;
    transform: translateX(-50%);
    background: ${(p) => (p.$on ? "#4cb8f5" : "#9a9b9b")};
  }
`;

const SearchPill = styled.label`
  display: flex;
  align-items: center;
  gap: 10px;
  width: 220px;
  height: 32px;
  margin: 0 2px 0 3px;
  padding: 0 13px;
  border-radius: 16px;
  border: 1px solid #505252;
  background: #3c3e3e;
  input {
    flex: 1;
    padding: 0;
    border: 0;
    background: none;
    font-size: 13px;
  }
  input::placeholder { color: #d3d4d4; opacity: 1; }
`;

const Tray = styled.div`
  display: flex;
  align-items: center;
  gap: 8px;
  margin-left: auto;
`;

const TrayButton = styled.button<{ $w: number }>`
  display: grid;
  place-items: center;
  width: ${(p) => p.$w}px;
  height: 40px;
`;

const Clock = styled.button`
  width: 64px;
  text-align: right;
  font-size: 12px;
  line-height: 16px;
`;

const taskIcons: { name: string; run?: boolean; on?: boolean; art: React.ReactNode }[] = [
  {
    name: "Task view",
    art: (
      <>
        <path d="M6 1h18v16H6z" fill="#e6e6e6" />
        <path d="M0 7h18v15H0z" fill="#8e8e8e" fillOpacity=".85" />
      </>
    ),
  },
  {
    name: "Snipping Tool",
    run: true,
    art: (
      <>
        <rect x="1" width="18" height="20" rx="2" fill="#eee" />
        <path d="M4 14V3h11v6M4 14h5" fill="none" stroke="#d83b1a" strokeWidth="2.500" strokeDasharray="2.500 1.500" />
        <path d="M16 4v12H8" fill="none" stroke="#a5a5a5" strokeWidth="3" />
        <circle cx="22" cy="13" r="2.200" fill="none" stroke="#3095e8" strokeWidth="2" />
        <circle cx="15" cy="21" r="2.200" fill="none" stroke="#3095e8" strokeWidth="2" />
        <path d="M11 12l4 6M12 12l8 1" stroke="#3095e8" strokeWidth="1.500" />
      </>
    ),
  },
  {
    name: "Outlook",
    run: true,
    art: (
      <>
        <path d="M1 10L12 1l11 6v12a4 4 0 0 1-4 4H5a4 4 0 0 1-4-4z" fill="#2a7fe0" />
        <path d="M3 9l12-8 8 5-13 10z" fill="#3d5bd8" />
        <path d="M6 14l10-10 5 3L8 18z" fill="#5a8ff0" />
        <path d="M5 18l18-10v11a4 4 0 0 1-4 4H6z" fill="#4fc0ff" />
        <rect x="0" y="11" width="11" height="11" rx="2" fill="#1565c8" />
        <circle cx="5.500" cy="16.500" r="3" fill="none" stroke="#fff" strokeWidth="1.600" />
      </>
    ),
  },
  {
    name: "File Explorer",
    run: true,
    art: (
      <>
        <path d="M0 2h9l3 3h12v4H0z" fill="#e8a321" />
        <path d="M0 6h24v16H0z" fill="#fcd04c" />
        <path d="M4 22v-5a2 2 0 0 1 2-2h12a2 2 0 0 1 2 2v5z" fill="#1d78d6" />
      </>
    ),
  },
  {
    name: "Teams",
    run: true,
    art: (
      <>
        <circle cx="10" cy="3" r="4" fill="#7a83e8" />
        <path d="M8 9h15v8a6 6 0 0 1-6 6h-4a5 5 0 0 1-5-5z" fill="#7a72e8" />
        <rect x="1" y="10" width="12" height="12" rx="2" fill="#4a50c8" />
        <text x="7" y="20" textAnchor="middle" fontSize="10" fontWeight="700" fill="#fff">T</text>
        <circle cx="22" cy="3" r="7" fill="#2b9a3a" />
        <path d="M19 3l2.500 2.500L25.500 1" fill="none" stroke="#10300f" strokeWidth="1.500" />
      </>
    ),
  },
  {
    name: "Spotify",
    run: true,
    art: (
      <>
        <circle cx="12" cy="12" r="11.500" fill="#25cc60" />
        <path d="M5 8.500c5-1.500 10-1 14 1.500M6 12.500c4-1 8-.5 11.500 1.500M7 16c3-1 6-.5 9 1" fill="none" stroke="#14251a" strokeWidth="2" strokeLinecap="round" />
      </>
    ),
  },
  {
    name: "Chrome",
    run: true,
    art: (
      <>
        <path d="M12 12L2 6a12 12 0 0 1 20.500 0z" fill="#e33b2e" />
        <path d="M12 12L2 6a12 12 0 0 0 9 18z" fill="#1f9d4d" />
        <path d="M12 12l10.500-6A12 12 0 0 1 11 24z" fill="#fbc72f" />
        <circle cx="12" cy="12" r="6" fill="#fff" />
        <circle cx="12" cy="12" r="4.700" fill="#3d7de8" />
      </>
    ),
  },
  {
    name: "WhatsApp",
    run: true,
    art: (
      <>
        <path d="M1.500 23l1.500-6A10.500 10.500 0 1 1 7 21.500z" fill="none" stroke="#25d366" strokeWidth="2.200" />
        <path d="M8 6.500c-2 3 3 11 9 10.500l1-2.500-3-1.500-1.500 1c-2-.5-3.500-2-4-4l1-1.500-1-2.500z" fill="#25d366" />
      </>
    ),
  },
  {
    name: "AutoCAD LT",
    run: true,
    on: true,
    art: (
      <>
        <path d="M1 2l3-2v22l-3 2z" fill="#d4707a" />
        <path d="M4 0h18v16H4z" fill="#ee1858" />
        <path d="M4 16h18v8H4z" fill="#7d0f2b" />
        <text x="13" y="13" textAnchor="middle" fontSize="13" fontWeight="700" fill="#fff">A</text>
        <text x="13" y="22" textAnchor="middle" fontSize="6" fontWeight="700" fill="#fff">LT</text>
      </>
    ),
  },
  {
    name: "Starburst",
    art: (
      <>
        <rect x="1" y="1" width="22" height="22" rx="3" fill="#0f74e0" />
        <path d="M12 4v16M4 12h16M6.300 6.300l11.400 11.400M17.700 6.300L6.300 17.700M9 4.600l6 14.800M15 4.600L9 19.400M4.600 9l14.800 6M4.600 15l14.800-6" stroke="#fff" strokeWidth="1.300" />
        <circle cx="12" cy="12" r="2.500" fill="#0f74e0" />
      </>
    ),
  },
  {
    name: "Stripes",
    run: true,
    art: (
      <>
        <rect width="24" height="24" rx="5" fill="#4f49d6" />
        <path d="M13 0h6a5 5 0 0 1 5 5v9z" fill="#f0745a" />
        <path d="M0 15h24v4a5 5 0 0 1-5 5H5a5 5 0 0 1-5-5z" fill="#3a8df0" />
        <path d="M4 11l11-4M4 16l16-6M10 18l10-4" stroke="#fff" strokeWidth="3" />
      </>
    ),
  },
  {
    name: "Settings",
    run: true,
    art: (
      <>
        <circle cx="12" cy="12" r="9.500" fill="#8d9298" />
        <circle cx="12" cy="12" r="10.500" fill="none" stroke="#8d9298" strokeWidth="3.500" strokeDasharray="5.500 5.500" />
        <circle cx="12" cy="12" r="5" fill="#1e63b8" stroke="#d5d8db" strokeWidth="1.800" />
      </>
    ),
  },
  {
    name: "Magic",
    run: true,
    art: (
      <>
        <rect x="2" y="2" width="20" height="20" rx="3" fill="#35208c" />
        <circle cx="12" cy="12" r="4.500" fill="none" stroke="#d9ccff" strokeWidth="2.500" strokeDasharray="22 6" />
        <path d="M13 12l5 6M5 6h2M17 5h2M5 18h1" stroke="#fff" strokeWidth="1.500" />
      </>
    ),
  },
];

const stairs = [801, 813, 825, 837, 849, 862, 874, 886, 898, 910, 923, 935, 947, 959];

function FloorPlan() {
  return (
    <Drawing role="img" aria-label="Floor plan drawing">
      <g transform="translate(0.5,-181.5)" fill="none">
        <g stroke="#3a253d">
          <path d="M230 182v790" />
          <path d="M288 182v790" strokeDasharray="15 7" strokeDashoffset="6" />
          <path d="M230 293h58M230 733h58" strokeDasharray="15 7" />
        </g>
        <g stroke="#666666">
          <path d="M741 344h2v44h-2zM831 345v29h103v101h30M964 403h-27v30h27" />
          <path d="M853 345h38v24h-38zM854 346h15v22h-15zM870 346h19v22h-19z" />
          <path d="M861 348h2v3h-2zM878 348h2v3h-2z" strokeWidth="0.800" />
          <path d="M841 533h2v37h-2zM891 571h2v34h-2z" />
          <path d="M935 571v42h29" />
          <path d="M964 618h-12v26h12M951 619v24" />
          <path d="M848 587v43M849 587v43M847 630v44M848 630v44M888 650h76M888 649h76" />
          <path d="M732 697v47h240M737 697v43h235M972 697v47M788 697v47M732 744l5-4" />
          {stairs.map((x) => (
            <path key={x} d={`M${x} 697v43`} />
          ))}
        </g>
        <g stroke="#6b6b6b" shapeRendering="geometricPrecision">
          <path d="M743 388a42 44 0 0 0 42-44M807 533a35 37 0 0 0 35 37M893 605a32 34 0 0 0 32-34" />
          <circle cx="944" cy="410" r="4" />
          <circle cx="958" cy="410" r="4" />
          <circle cx="944" cy="425" r="4" />
          <circle cx="958" cy="425" r="4" />
          <ellipse cx="949.500" cy="591" rx="10" ry="12" strokeWidth="1.500" />
          <ellipse cx="949.500" cy="591" rx="8" ry="10" />
          <circle cx="951.500" cy="591" r="1.500" fill="#6b6b6b" />
          <path d="M951 619l-5 4c-12 0-18 3-18 8s6 9 18 8l5 4M944 622c6 2 7 6 7 9s-1 7-7 9" />
          <path d="M890 651l61 18-61 18M964 651l-9 15M964 687l-9-14M957 666l6 3-6 4z" />
          <path d="M950 667h4v4h-4z" fill="#6b6b6b" />
          <path d="M749 706l4-7h9l4 7-4 7h-9z" />
          <path d="M760 704a3 3 0 1 0 0 4" strokeWidth="1.200" />
        </g>
        <g stroke="#000090">
          <path d="M843 344h58M678 404v58M686 404v58M727 688h60M727 696h60M964 617v29M972 617v29" />
          <path d="M843 339h58v2h-58zM681 404h2v58h-2zM727 691h60v2h-60zM967 617h2v29h-2z" fill="#000090" />
        </g>
        <g stroke="#7c0606">
          <path d="M678 340v64h8v-60h55v-4M678 462v234h49v-8h-41v-155M686 528v-66h-8" />
          <path d="M785 338v6h57v-7h-6M901 337h71v280h-8v-46M901 337v7h63v177M964 526v40" />
          <path d="M972 646v50h-186v-8h65M889 688h75v-42h8M851 688h33" />
        </g>
        <g stroke="#7c0606" strokeDasharray="9 3">
          <path d="M686 528h121v5h-121M843 533v-5h8v38h40v5M846 533v53h5v-15h40" />
          <path d="M884 571v117M888 571v117M846 688v-14h5v14M964 521h-39v5h39M964 566h-39v5h39" />
        </g>
      </g>
    </Drawing>
  );
}

export default function App() {
  return (
    <Screen>
      <Global />
      <TitleBar>
        <AppMenu aria-label="Application menu">
          <Svg width="40" height="22">
            <path d="M0 4l4-3v17l-4 4z" fill="#d4606d" />
            <path d="M4 1h16v18H4z" fill="#ee1858" />
            <path d="M20 1h20v17H20z" fill="#74152b" />
            <text x="12" y="15" textAnchor="middle" fontSize="13" fontWeight="700" fill="#fff">A</text>
            <text x="29" y="13" textAnchor="middle" fontSize="8" fontWeight="600" fill="#fff">LT</text>
          </Svg>
          <Caret />
        </AppMenu>
        {["newFile", "open", "save", "saveAs", "mobileOpen", "mobileSave", "print", "undo"].map((n) => (
          <IconButton key={n} aria-label={n}>
            <Icon n={n} />
          </IconButton>
        ))}
        <IconButton $w={12} aria-label="Undo list"><Caret /></IconButton>
        <IconButton aria-label="Redo"><Icon n="redo" /></IconButton>
        <IconButton $w={12} aria-label="Redo list"><Caret /></IconButton>
        <IconButton $on aria-label="Sheet set"><Icon n="sheet" h={18} /></IconButton>
        <IconButton $w={15} aria-label="Customize"><Icon n="customize" s={8} h={12} /></IconButton>
        <ShareLink>
          <Icon n="plane" />
          Share
        </ShareLink>
        <DocTitle>{"Autodesk AutoCAD LT 2026     26032_S101.dwg"}</DocTitle>
        <Svg width="4" height="8"><path d="M0 0l4 4-4 4z" fill={W} /></Svg>
        <KeywordBox aria-label="Search help" placeholder="Type a keyword or phrase" />
        <IconButton aria-label="Search"><Icon n="search" /></IconButton>
        <UserButton>
          <Icon n="user" />
          cameron688PE
        </UserButton>
        <IconButton $w={18} aria-label="Account"><Caret /></IconButton>
        <IconButton aria-label="App store"><Icon n="apps" /></IconButton>
        <IconButton $w={9} aria-label="App store list"><Caret /></IconButton>
        <TitleDivider />
        <IconButton aria-label="Help"><Icon n="help" /></IconButton>
        <IconButton $w={12} aria-label="Help list"><Caret /></IconButton>
        <IconButton aria-label="Assistant"><Icon n="assistant" /></IconButton>
        <WindowButtons>
          <IconButton $w={46} aria-label="Minimize"><Icon n="winMin" s={10} h={16} /></IconButton>
          <IconButton $w={46} aria-label="Restore"><Icon n="winRestore" s={10} h={16} /></IconButton>
          <IconButton $w={46} aria-label="Close"><Icon n="winClose" s={10} h={16} /></IconButton>
        </WindowButtons>
      </TitleBar>

      <Tabs>
        {["Home", "Insert", "Annotate", "View", "Manage", "Output", "Collaborate"].map((t, i) => (
          <Tab key={t} $on={i === 0}>{t}</Tab>
        ))}
        <TabToggle aria-label="Minimize ribbon">
          <span><Caret $up $color="#333" /></span>
          <Caret />
        </TabToggle>
      </Tabs>

      <Ribbon>
        <RibbonPanel w={222} t="Draw">
          <Big i="line" t="Line" w={45} />
          <Big i="polyline" t="Polyline" w={43} />
          <Big i="circle" t="Circle" w={55} drop />
          <Big i="arc" t="Arc" w={38} drop />
          <Column $pad={6}>
            <ToolItem i="rect" drop />
            <ToolItem i="ellipse" drop />
            <ToolItem i="hatch" drop />
          </Column>
        </RibbonPanel>
        <RibbonPanel w={234} t="Modify">
          <Column $w={75} $pad={7}>
            <ToolItem i="move" t="Move" />
            <ToolItem i="copy" t="Copy" />
            <ToolItem i="stretch" t="Stretch" />
          </Column>
          <Column $w={65}>
            <ToolItem i="rotate" t="Rotate" />
            <ToolItem i="mirror" t="Mirror" />
            <ToolItem i="scale" t="Scale" />
          </Column>
          <Column $w={67}>
            <ToolItem i="trim" t="Trim" drop right />
            <ToolItem i="fillet" t="Fillet" drop right />
            <ToolItem i="array" t="Array" drop right />
          </Column>
          <Column $pad={4}>
            <ToolItem i="erase" />
            <ToolItem i="explode" />
            <ToolItem i="offset" />
          </Column>
        </RibbonPanel>
        <RibbonPanel w={189} t="Annotation">
          <Big i="text" t="Text" w={47} drop />
          <Big i="dimension" t="Dimension" w={59} />
          <Column $pad={7}>
            <ToolItem i="linear" t="Linear" drop />
            <ToolItem i="leader" t="Leader" drop />
            <ToolItem i="table" t="Table" />
          </Column>
        </RibbonPanel>
        <RibbonPanel w={273} t="Layers">
          <Column $w={62} $pad={2}>
            <Big i="layerProps" t={"Layer\nProperties"} w={59} on />
          </Column>
          <Column>
            <Combo>
              <Icon n="bulb" />
              <Icon n="sun" />
              <Icon n="unlock" />
              <Icon n="swatch" />
              <select aria-label="Current layer"><option>S-XIST</option></select>
              <Caret $big />
            </Combo>
            <Tool $pad={4}>
              <LayerIcons>
                {["layOff", "layIso", "layFreeze", "layLock", "makeCurrent"].map((n) => (
                  <button key={n} aria-label={n}><Icon n={n} /></button>
                ))}
              </LayerIcons>
              <ToolButton>Make Current</ToolButton>
            </Tool>
            <Tool $pad={4}>
              <LayerIcons>
                {["layOn", "layUniso", "layThaw", "layUnlock", "matchLayer"].map((n) => (
                  <button key={n} aria-label={n}><Icon n={n} /></button>
                ))}
              </LayerIcons>
              <ToolButton>Match Layer</ToolButton>
            </Tool>
          </Column>
        </RibbonPanel>
        <RibbonPanel w={225} t="Block">
          <Big i="insert" t="Insert" w={42} drop />
          <Big i="searchConvert" t={"Search and\nConvert"} w={60} />
          <Column $pad={7}>
            <ToolItem i="create" t="Create" />
            <ToolItem i="edit" t="Edit" />
            <ToolItem i="editAttr" t="Edit Attributes" drop right />
          </Column>
        </RibbonPanel>
        <RibbonPanel
          w={265}
          t="Properties"
          extra={
            <Launcher aria-label="Properties palette">
              <Svg width="7" height="7"><path d="M1 1l5 5M6 1v5H1" fill="none" stroke={W} /></Svg>
            </Launcher>
          }
        >
          <Big i="matchProps" t={"Match\nProperties"} w={64} />
          <Column $w={20}>
            <ToolItem i="wheel" />
            <ToolItem i="weights" />
            <ToolItem i="ltypes" />
          </Column>
          <Column>
            <Combo>
              <Icon n="swatch" />
              <select aria-label="Object color"><option>ByLayer</option></select>
              <Caret $big />
            </Combo>
            <Combo>
              <LineSample $w={64} />
              <select aria-label="Lineweight"><option>ByLayer</option></select>
              <Caret $big />
            </Combo>
            <Combo>
              <LineSample $w={64} />
              <select aria-label="Linetype"><option>ByLayer</option></select>
              <Caret $big />
            </Combo>
          </Column>
        </RibbonPanel>
        <RibbonPanel w={69} t="Groups">
          <Big i="group" t="Group" w={42} />
          <Column>
            <IconButton $h={24} aria-label="Ungroup"><Icon n="ungroup" /></IconButton>
            <IconButton $h={24} aria-label="Group edit"><Icon n="groupEdit" /></IconButton>
            <IconButton $h={24} $on aria-label="Group selection"><Icon n="groupSel" /></IconButton>
          </Column>
        </RibbonPanel>
        <RibbonPanel w={97} t="Utilities">
          <Big i="measure" t="Measure" w={70} drop />
          <Column>
            <IconButton $h={24} aria-label="Quick select"><Icon n="quickSel" /></IconButton>
            <IconButton $h={24} aria-label="Select all"><Icon n="selectAll" /></IconButton>
            <IconButton $h={24} aria-label="Calculator"><Icon n="calc" /></IconButton>
          </Column>
        </RibbonPanel>
        <RibbonPanel w={90} t="Clipboard" last noMenu>
          <Big i="paste" t="Paste" w={54} drop />
          <Column $pad={3}>
            <ToolItem i="cut" drop />
            <ToolItem i="copyClip" drop />
          </Column>
        </RibbonPanel>
      </Ribbon>

      <DocTabs>
        <IconButton aria-label="Drawing menu"><Icon n="menu" /></IconButton>
        <Slash />
        <DocTab $pad="0 8px 0 6px">Start</DocTab>
        <DocTab $on $pad="0 12px 0 16px">
          26032_S101*
          <Svg width="8" height="10"><path d="M0 1l8 8M8 1L0 9" stroke="#a9aeb5" strokeWidth="2" /></Svg>
        </DocTab>
        <DocTab $pad="0 22px 0 7px">3843 College Ave, San Diego CA 92115*</DocTab>
        <Slash />
        <IconButton aria-label="New drawing"><Icon n="plus" /></IconButton>
        <Slash />
      </DocTabs>
      <Strip />

      <Work>
        <Canvas>
          <FloorPlan />
          <DynamicInput>
            <Prompt htmlFor="coord-x">Specify first corner:</Prompt>
            <ActiveCoord><input id="coord-x" aria-label="X" defaultValue={"28'-7 1/2\""} /></ActiveCoord>
            <Coord aria-label="Y" defaultValue={"62'-4 5/8\""} />
          </DynamicInput>
          <ChildButtons>
            <button aria-label="Minimize drawing">
              <Svg width="11" height="12"><path d="M0 10h10" stroke="#eee" strokeWidth="3" /></Svg>
            </button>
            <button aria-label="Restore drawing">
              <Svg width="11" height="12">
                <path d="M1 4h7v7H1zM3 1h7v7" fill="none" stroke="#eee" strokeWidth="2" />
              </Svg>
            </button>
            <button aria-label="Close drawing">
              <Svg width="10" height="12"><path d="M1 2l8 9M9 2l-8 9" stroke="#eee" strokeWidth="2.500" /></Svg>
            </button>
          </ChildButtons>
          <NavBar>
            <NavCap $top>
              <Svg width="8" height="8">
                <circle cx="4" cy="4" r="3.500" fill="#333" />
                <path d="M2 2l4 4M6 2L2 6" stroke="#777" />
              </Svg>
            </NavCap>
            <IconButton $w={28} $h={36} aria-label="Steering wheel"><Icon n="wheel2d" s={26} h={22} /></IconButton>
            <NavRule />
            <IconButton $w={28} $h={28} aria-label="Pan"><Icon n="hand" s={24} h={20} /></IconButton>
            <IconButton $w={28} $h={28} aria-label="Zoom extents"><Icon n="zoomExt" s={24} /></IconButton>
            <Svg width="6" height="10"><path d="M0 4h6l-3 4z" fill="#262b31" /></Svg>
            <NavCap>
              <Svg width="8" height="8">
                <circle cx="4" cy="4" r="3" fill="none" stroke="#262b31" strokeWidth="1.500" />
                <path d="M2 4h4" stroke="#262b31" />
              </Svg>
            </NavCap>
          </NavBar>
          <CommandArea>
            <History>Specify clipping boundary or select invert option:</History>
            <History $new>{"[Select polyline/Polygonal/Rectangular/Invert clip] <Rectangular>: R"}</History>
            <CommandBar>
              <CommandTools>
                <Grip $h={18} />
                <button aria-label="Close command line"><Icon n="close" s={14} h={16} /></button>
                <button aria-label="Customize command line"><Icon n="wrench" /></button>
              </CommandTools>
              <CommandLine>
                <Icon n="xclip" />
                <Caret $big $color="#555" />
                <strong>XCLIP</strong>
                <input aria-label="Command" defaultValue="Specify first corner:" />
                <Caret $up $color="#555" />
              </CommandLine>
            </CommandBar>
          </CommandArea>
        </Canvas>

        <Palette>
          <PaletteTitle>
            <Grip $h={10} />
            PROPERTIES
          </PaletteTitle>
          <PaletteBody>
            <SelectionRow>
              <SelectionBox>
                <select aria-label="Selection"><option>No selection</option></select>
                <Caret $big />
              </SelectionBox>
              {["pickAdd", "selectObjects", "quickSel"].map((n) => (
                <button key={n} aria-label={n}><Icon n={n} /></button>
              ))}
            </SelectionRow>
            {sections.map((s) => (
              <React.Fragment key={s.title}>
                <SectionTitle>
                  {s.title}
                  <Caret $big />
                </SectionTitle>
                <PropTable>
                  <tbody>
                    {s.rows.map(([label, value, kind]) => (
                      <tr key={label}>
                        <th scope="row">{label}</th>
                        <td>
                          <Value $dim={kind === "dim"}>
                            {kind === "swatch" && <Swatch />}
                            {kind === "line" && <LineSample $w={66} />}
                            {value}
                          </Value>
                        </td>
                      </tr>
                    ))}
                  </tbody>
                </PropTable>
              </React.Fragment>
            ))}
          </PaletteBody>
        </Palette>
      </Work>
      <Strip />

      <StatusBar>
        <LayoutTabs>
          <IconButton aria-label="Layout menu"><Icon n="menu" /></IconButton>
          <DocTab $on $ml={4} $pad="0 16px 0 18px">Model</DocTab>
          <DocTab $pad="0 4px 0 8px">SXXX</DocTab>
          <Slash />
          <IconButton aria-label="New layout"><Icon n="plus" /></IconButton>
          <Slash />
        </LayoutTabs>
        <StatusGroup><StatusButton $w={47}>MODEL</StatusButton></StatusGroup>
        <StatusGroup>
          <StatusButton aria-label="Grid"><Icon n="grid" /></StatusButton>
          <StatusButton aria-label="Snap"><Icon n="snap" /></StatusButton>
          <StatusButton $w={16} aria-label="Snap options"><Caret $big /></StatusButton>
        </StatusGroup>
        <StatusGroup>
          <StatusButton aria-label="Ortho"><Icon n="ortho" /></StatusButton>
          <StatusButton $on $w={22} aria-label="Polar"><Icon n="polar" /></StatusButton>
          <StatusButton $w={20} aria-label="Polar options"><Caret $big /></StatusButton>
          <StatusButton $w={20} aria-label="Isometric"><Icon n="iso" /></StatusButton>
          <StatusButton $w={20} aria-label="Isometric options"><Caret $big /></StatusButton>
          <StatusButton $on aria-label="Tracking"><Icon n="track" /></StatusButton>
          <StatusButton $on $w={22} aria-label="Object snap"><Icon n="osnap" /></StatusButton>
          <StatusButton $w={16} aria-label="Object snap options"><Caret $big /></StatusButton>
        </StatusGroup>
        <StatusGroup><StatusButton $on aria-label="Lineweight display"><Icon n="lweight" /></StatusButton></StatusGroup>
        <StatusGroup>
          <StatusButton $on aria-label="Annotation visibility"><Icon n="annoVis" /></StatusButton>
          <StatusButton aria-label="Auto scale"><Icon n="annoAuto" /></StatusButton>
          <StatusButton aria-label="Annotation scale"><Icon n="annoScale" /></StatusButton>
          <StatusButton $w={66}>4:1_XREF<Caret $big /></StatusButton>
        </StatusGroup>
        <StatusGroup>
          <StatusButton aria-label="Workspace"><Icon n="gear" /></StatusButton>
          <StatusButton $w={17} aria-label="Workspace options"><Caret $big /></StatusButton>
          <StatusButton aria-label="Annotation monitor"><Icon n="plus" /></StatusButton>
        </StatusGroup>
        <StatusGroup><StatusButton aria-label="Isolate objects"><Icon n="isolate" /></StatusButton></StatusGroup>
        <StatusGroup><StatusButton $fill="#466a8c" aria-label="Graphics performance"><Icon n="hardware" /></StatusButton></StatusGroup>
        <StatusGroup>
          <StatusButton $w={28} aria-label="External references"><Icon n="xref" /></StatusButton>
          <StatusButton $w={28} aria-label="System monitor"><Icon n="monitor" /></StatusButton>
          <StatusButton $w={28} aria-label="Attach notice"><Icon n="notes" /></StatusButton>
        </StatusGroup>
        <StatusGroup><StatusButton $w={23} aria-label="Clean screen"><Icon n="clean" /></StatusButton></StatusGroup>
        <StatusGroup><StatusButton aria-label="Customization"><Icon n="menu" /></StatusButton></StatusGroup>
      </StatusBar>

      <Taskbar>
        <TaskButton aria-label="Start">
          <Svg width="24" height="24">
            <path d="M1 0h11v11H1zM13 0h11v11H13z" fill="#6cc8fa" />
            <path d="M1 12h11v11H1zM13 12h11v11H13z" fill="#34b2f5" />
          </Svg>
        </TaskButton>
        <SearchPill>
          <Svg width="14" height="16">
            <circle cx="6" cy="6.500" r="5" fill="none" stroke="#ddd" strokeWidth="1.800" />
            <path d="M9.500 10.500l4 5" stroke="#ddd" strokeWidth="1.800" />
          </Svg>
          <input aria-label="Search Windows" placeholder="Search" />
        </SearchPill>
        {taskIcons.map((t) => (
          <TaskButton key={t.name} aria-label={t.name} $run={t.run} $on={t.on}>
            <Svg width="24" height="24">{t.art}</Svg>
          </TaskButton>
        ))}
        <Tray>
          <TrayButton $w={24} aria-label="Hidden icons">
            <Svg width="11" height="8"><path d="M1 7l4.500-5L10 7" fill="none" stroke="#eee" strokeWidth="1.800" /></Svg>
          </TrayButton>
          <TrayButton $w={24} aria-label="OneDrive">
            <Svg width="16" height="16">
              <path d="M3 12a3.500 3.500 0 0 1 0-7 5 5 0 0 1 9-1 4 4 0 0 1 2 8z" fill="#1f7fe0" />
              <circle cx="12" cy="11.500" r="4" fill="#2f9bf0" />
              <path d="M10 11h4M10 13h4" stroke="#fff" />
            </Svg>
          </TrayButton>
          <TrayButton $w={28} aria-label="Microphone">
            <Svg width="12" height="16">
              <rect x="3.500" y="1" width="5" height="9" rx="2.500" fill="#335f7a" stroke="#8ecbf0" />
              <path d="M1 7c0 7 10 7 10 0M6 12v4" fill="none" stroke="#8ecbf0" />
            </Svg>
          </TrayButton>
          <Svg width="16" height="16">
            <path d="M1 6a10 10 0 0 1 14 0M3 9a7 7 0 0 1 10 0M5.500 11.500a4 4 0 0 1 5 0" fill="none" stroke="#eee" strokeWidth="1.500" />
            <circle cx="8" cy="13.500" r="1.500" fill="#eee" />
          </Svg>
          <Svg width="16" height="16">
            <path d="M1 6h3l4-4v12l-4-4H1z" fill="none" stroke="#eee" strokeWidth="1.300" />
            <path d="M10 6c1 1 1 3 0 4" fill="none" stroke="#eee" strokeWidth="1.300" />
            <path d="M12 4c2 2 2 6 0 8M14 2c3 3 3 9 0 12" fill="none" stroke="#6a6a6a" />
          </Svg>
          <Svg width="20" height="16">
            <rect x="1" y="4" width="16" height="10" rx="3" fill="#9fd8a8" stroke="#eee" strokeWidth="1.300" />
            <path d="M19 7v4" stroke="#eee" strokeWidth="1.500" />
            <path d="M10 0L6 7h3l-1 5 5-7h-3z" fill="#eee" stroke="#333" strokeWidth=".6" />
          </Svg>
          <Clock>
            3:07 PM
            <br />
            5/22/2026
          </Clock>
        </Tray>
      </Taskbar>
    </Screen>
  );
}
